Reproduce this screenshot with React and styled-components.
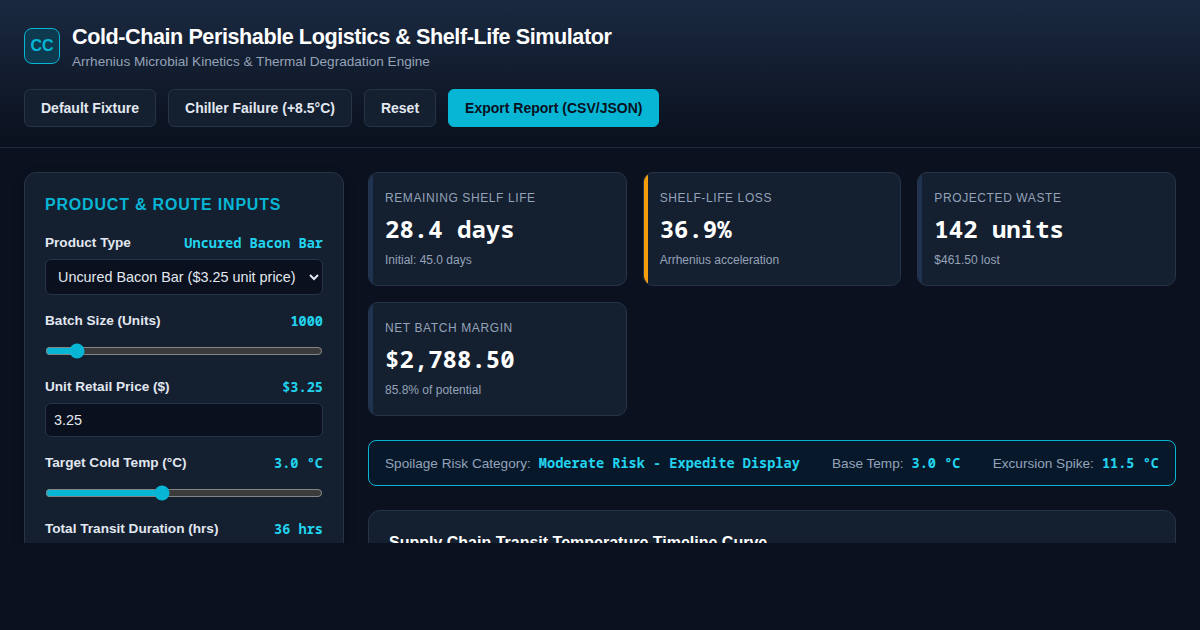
import React from 'react';
import styled, { createGlobalStyle } from 'styled-components';

const GlobalStyle = createGlobalStyle`
  * { box-sizing: border-box; }
  html, body { margin: 0; height: 100%; background: #0b111e; color-scheme: dark; }
  body { font-family: "Liberation Sans", Arial, sans-serif; color: #e2e8f0; overflow: hidden; }
`;

const Header = styled.header`
  height: 148px;
  padding: 24px 24px 20px;
  background: linear-gradient(180deg, #1a2940 0%, #0a101d 100%);
  border-bottom: 1px solid #1e2a3d;
`;

const Brand = styled.div`
  display: flex;
  align-items: flex-start;
  gap: 12px;
  margin-bottom: 19px;
`;

const Logo = styled.div`
  width: 36px;
  height: 36px;
  margin-top: 4px;
  display: flex;
  align-items: center;
  justify-content: center;
  border: 1px solid #06b6d4;
  border-radius: 8px;
  background: #0e3a50;
  color: #06b6d4;
  font-size: 16px;
  font-weight: 700;
`;

const Title = styled.h1`
  margin: 1px 0 0;
  font-size: 21.6px;
  line-height: 24px;
  font-weight: 700;
  letter-spacing: -0.02em;
  color: #ffffff;
`;

const Subtitle = styled.p`
  margin: 5px 0 0;
  font-size: 13.6px;
  line-height: 16px;
  color: #94a3b8;
`;

const Toolbar = styled.div`
  display: flex;
  gap: 12px;
`;

const Button = styled.button`
  height: 38px;
  padding: 0 16px;
  border-radius: 6px;
  border: 1px solid ${(props) => (props.$primary ? '#06b6d4' : '#263449')};
  background: ${(props) => (props.$primary ? '#06b6d4' : '#141f30')};
  color: ${(props) => (props.$primary ? '#0a101d' : '#e2e8f0')};
  font-family: inherit;
  font-size: 14px;
  font-weight: 700;
  cursor: pointer;
`;

const Main = styled.main`
  height: 395px;
  overflow: hidden;
  padding: 24px;
  display: grid;
  grid-template-columns: 320px 1fr;
  gap: 24px;
  align-items: start;
`;

const Panel = styled.section`
  padding: 20px;
  background: #141f30;
  border: 1px solid #263449;
  border-radius: 12px;
  box-shadow: 0 4px 12px rgba(0, 0, 0, 0.3);
`;

const PanelTitle = styled.h2`
  margin: 2px 0 20px;
  font-size: 16px;
  line-height: 19px;
  font-weight: 700;
  letter-spacing: 0.8px;
  text-transform: uppercase;
  color: #06b6d4;
`;

const Field = styled.div`
  margin-bottom: 17px;
`;

const FieldHead = styled.div`
  display: flex;
  justify-content: space-between;
  align-items: center;
  height: 16px;
  margin-bottom: 9px;
`;

const Label = styled.label`
  font-size: 13.6px;
  font-weight: 700;
  color: #e2e8f0;
`;

const Mono = styled.span`
  font-family: "Noto Sans Mono", monospace;
  font-size: 13.6px;
  font-weight: 700;
  color: #22d3ee;
`;

const Select = styled.select`
  width: 100%;
  height: 36px;
  padding: 0 8px;
  background: #0a101d;
  color: #e2e8f0;
  border: 1px solid #263449;
  border-radius: 6px;
  font-family: inherit;
  font-size: 14.4px;
`;

const NumberInput = styled.input`
  width: 100%;
  height: 34px;
  padding: 0 8px;
  background: #0a101d;
  color: #e2e8f0;
  border: 1px solid #263449;
  border-radius: 6px;
  font-family: inherit;
  font-size: 14.4px;
`;

/* margins collapse with FieldHead and Field, hence the larger values */
const Range = styled.input`
  display: block;
  width: 100%;
  margin: 15px 0 19px;
  height: 16px;
  accent-color: #06b6d4;
`;

const Content = styled.div`
  display: flex;
  flex-direction: column;
  gap: 24px;
`;

const Cards = styled.div`
  display: grid;
  grid-template-columns: repeat(3, 1fr);
  gap: 16px;
`;

const Card = styled.div`
  position: relative;
  overflow: hidden;
  height: 114px;
  padding: 16px;
  background: #141f30;
  border: 1px solid #263449;
  border-radius: 10px;

  &::before {
    content: '';
    position: absolute;
    left: 0;
    top: 0;
    bottom: 0;
    width: 4px;
    background: ${(props) => props.$accent || '#1f3350'};
  }
`;

const CardLabel = styled.div`
  font-size: 12px;
  line-height: 18px;
  letter-spacing: 0.6px;
  text-transform: uppercase;
  color: #94a3b8;
`;

const CardValue = styled.div`
  margin-top: 6px;
  font-family: "Noto Sans Mono", monospace;
  font-size: 24px;
  line-height: 32px;
  font-weight: 700;
  color: #ffffff;
`;

const CardNote = styled.div`
  margin-top: 7px;
  font-size: 12px;
  line-height: 16px;
  color: #94a3b8;
`;

const RiskBar = styled.div`
  height: 46px;
  padding: 0 16px 2px;
  display: flex;
  align-items: center;
  justify-content: space-between;
  background: #07182b;
  border: 1px solid #06b6d4;
  border-radius: 8px;
`;

const RiskItem = styled.div`
  display: flex;
  align-items: baseline;
  gap: 8px;
  font-size: 13.6px;
  color: #94a3b8;
`;

const ChartCard = styled.section`
  height: 320px;
  padding: 20px;
  background: #141f30;
  border: 1px solid #263449;
  border-radius: 12px;
`;

const ChartTitle = styled.h3`
  margin: 0;
  font-size: 16px;
  line-height: 24px;
  font-weight: 700;
  color: #ffffff;
`;

const stats = [
  { label: 'Remaining Shelf Life', value: '28.4 days', note: 'Initial: 45.0 days' },
  { label: 'Shelf-Life Loss', value: '36.9%', note: 'Arrhenius acceleration', accent: '#f59e0b' },
  { label: 'Projected Waste', value: '142 units', note: '$461.50 lost' },
  { label: 'Net Batch Margin', value: '$2,788.50', note: '85.8% of potential' },
];

export default function App() {
  return (
    <>
      <GlobalStyle />
      <Header>
        <Brand>
          <Logo>CC</Logo>
          <div>
            <Title>Cold-Chain Perishable Logistics &amp; Shelf-Life Simulator</Title>
            <Subtitle>Arrhenius Microbial Kinetics &amp; Thermal Degradation Engine</Subtitle>
          </div>
        </Brand>
        <Toolbar>
          <Button>Default Fixture</Button>
          <Button>Chiller Failure (+8.5°C)</Button>
          <Button>Reset</Button>
          <Button $primary>Export Report (CSV/JSON)</Button>
        </Toolbar>
      </Header>
      <Main>
        <Panel>
          <PanelTitle>Product &amp; Route Inputs</PanelTitle>
          <Field>
            <FieldHead>
              <Label>Product Type</Label>
              <Mono>Uncured Bacon Bar</Mono>
            </FieldHead>
            <Select defaultValue="bacon">
              <option value="bacon">Uncured Bacon Bar ($3.25 unit price)</option>
            </Select>
          </Field>
          <Field>
            <FieldHead>
              <Label>Batch Size (Units)</Label>
              <Mono>1000</Mono>
            </FieldHead>
            <Range type="range" min="100" max="10000" defaultValue="1000" />
          </Field>
          <Field>
            <FieldHead>
              <Label>Unit Retail Price ($)</Label>
              <Mono>$3.25</Mono>
            </FieldHead>
            <NumberInput type="number" step="0.01" defaultValue="3.25" />
          </Field>
          <Field>
            <FieldHead>
              <Label>Target Cold Temp (°C)</Label>
              <Mono>3.0 °C</Mono>
            </FieldHead>
            <Range type="range" min="-2" max="10" step="0.5" defaultValue="3" />
          </Field>
          <Field>
            <FieldHead>
              <Label>Total Transit Duration (hrs)</Label>
              <Mono>36 hrs</Mono>
            </FieldHead>
            <Range type="range" min="6" max="120" defaultValue="36" />
          </Field>
        </Panel>
        <Content>
          <Cards>
            {stats.map((stat) => (
              <Card key={stat.label} $accent={stat.accent}>
                <CardLabel>{stat.label}</CardLabel>
                <CardValue>{stat.value}</CardValue>
                <CardNote>{stat.note}</CardNote>
              </Card>
            ))}
          </Cards>
          <RiskBar>
            <RiskItem>Spoilage Risk Category: <Mono>Moderate Risk - Expedite Display</Mono></RiskItem>
            <RiskItem>Base Temp: <Mono>3.0 °C</Mono></RiskItem>
            <RiskItem>Excursion Spike: <Mono>11.5 °C</Mono></RiskItem>
          </RiskBar>
          <ChartCard>
            <ChartTitle>Supply Chain Transit Temperature Timeline Curve</ChartTitle>
          </ChartCard>
        </Content>
      </Main>
    </>
  );
}
